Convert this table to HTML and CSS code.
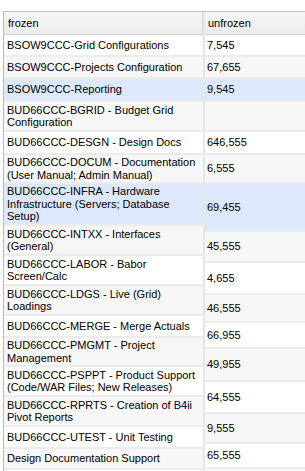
FILE: index.html
```html
<!DOCTYPE html>
<html>
<head>
<meta charset="utf-8">
<link rel="stylesheet" href="styles.css">
</head>
<body>
<div class="grid">
  <div class="col frozen">
    <div class="hdr">frozen</div>
    <div class="cell h22">BSOW9CCC-Grid Configurations</div>
    <div class="cell h22 alt">BSOW9CCC-Projects Configuration</div>
    <div class="cell h23 sel">BSOW9CCC-Reporting</div>
    <div class="cell h30 alt">BUD66CCC-BGRID - Budget Grid<br>Configuration</div>
    <div class="cell h23">BUD66CCC-DESGN - Design Docs</div>
    <div class="cell h29 alt">BUD66CCC-DOCUM - Documentation<br>(User Manual; Admin Manual)</div>
    <div class="cell h42 sel">BUD66CCC-INFRA - Hardware<br>Infrastructure (Servers; Database<br>Setup)</div>
    <div class="cell h30 alt">BUD66CCC-INTXX - Interfaces<br>(General)</div>
    <div class="cell h30">BUD66CCC-LABOR - Babor<br>Screen/Calc</div>
    <div class="cell h30 alt">BUD66CCC-LDGS - Live (Grid)<br>Loadings</div>
    <div class="cell h22">BUD66CCC-MERGE - Merge Actuals</div>
    <div class="cell h29 alt">BUD66CCC-PMGMT - Project<br>Management</div>
    <div class="cell h30">BUD66CCC-PSPPT - Product Support<br>(Code/WAR Files; New Releases)</div>
    <div class="cell h30 alt">BUD66CCC-RPRTS - Creation of B4ii<br>Pivot Reports</div>
    <div class="cell h22">BUD66CCC-UTEST - Unit Testing</div>
    <div class="cell h21 alt">Design Documentation Support</div>
    <div class="cell h22"></div>
  </div>
  <div class="col unfrozen">
    <div class="hdr">unfrozen</div>
    <div class="cell h22">7,545</div>
    <div class="cell h22 alt">67,655</div>
    <div class="cell h23 sel">9,545</div>
    <div class="cell h30 alt"></div>
    <div class="cell h23">646,555</div>
    <div class="cell h29 alt">6,555</div>
    <div class="cell h48 sel">69,455</div>
    <div class="cell h31 alt">45,555</div>
    <div class="cell h32">4,655</div>
    <div class="cell h28 alt">46,555</div>
    <div class="cell h26">66,955</div>
    <div class="cell h33 alt">49,955</div>
    <div class="cell h32">64,555</div>
    <div class="cell h30 alt">9,555</div>
    <div class="cell h25">65,555</div>
    <div class="cell h22 alt"></div>
  </div>
</div>
</body>
</html>
```
FILE: styles.css
```css
html, body {
  margin: 0;
  padding: 0;
  background: #ffffff;
}
body {
  font-family: "Liberation Sans", Arial, sans-serif;
  font-size: 11px;
  color: #000;
  overflow: hidden;
}
.grid {
  display: flex;
  margin: 11px 0 0 3px;
  border-top: 1px solid #c4c4c4;
  border-left: 1px solid #b8b8b8;
  height: 470px;
}
.col {
  display: flex;
  flex-direction: column;
}
.frozen {
  width: 199px;
  border-right: 2px solid #e6e6e6;
}
.unfrozen {
  flex: 1;
}
.hdr {
  height: 23px;
  box-sizing: border-box;
  display: flex;
  align-items: center;
  padding-left: 4px;
  background: linear-gradient(#f6f6f6, #ececec);
  border-bottom: 1px solid #d2d2d2;
  flex: none;
}
.frozen .hdr {
  padding-left: 4px;
  box-shadow: inset -1px 0 0 #d6d6d6;
}
.unfrozen .hdr {
  padding-left: 3px;
}
.cell {
  box-sizing: border-box;
  display: flex;
  align-items: center;
  border-bottom: 2px solid #ececec;
  line-height: 12.5px;
  white-space: nowrap;
  flex: none;
  background: #ffffff;
}
.frozen .cell {
  padding-left: 3px;
}
.unfrozen .cell {
  padding-left: 2px;
}
.alt { background: #f7f7f7; }
.sel { background: #dce9fc; }
.h21 { height: 21px; }
.h22 { height: 22px; }
.h23 { height: 23px; }
.h25 { height: 25px; }
.h26 { height: 26px; }
.h28 { height: 28px; }
.h29 { height: 29px; }
.h30 { height: 30px; }
.h31 { height: 31px; }
.h32 { height: 32px; }
.h33 { height: 33px; }
.h42 { height: 42px; }
.h48 { height: 48px; }
```
